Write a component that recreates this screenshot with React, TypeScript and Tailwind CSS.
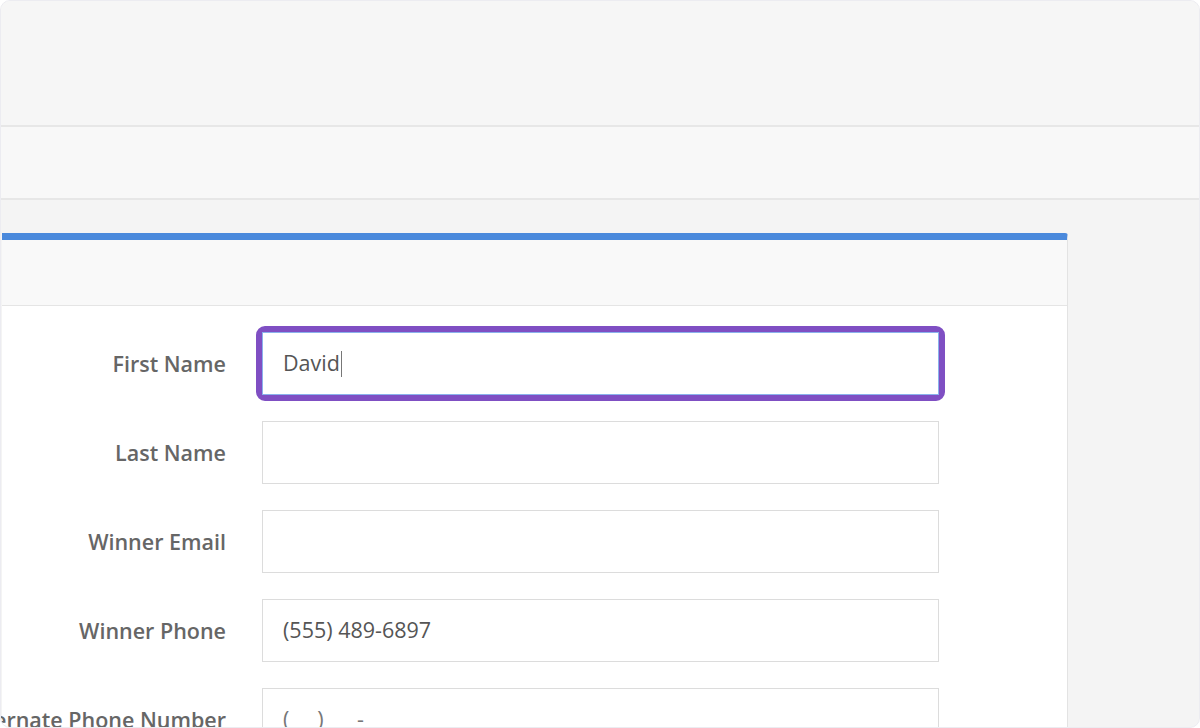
const rows = [
  { label: 'First Name', value: 'David', focused: true },
  { label: 'Last Name', value: '' },
  { label: 'Winner Email', value: '' },
  { label: 'Winner Phone', value: '(555) 489-6897' },
  { label: 'Alternate Phone Number', value: '', placeholder: '(     )      -' },
]

function Field({ value, placeholder, focused }: { value: string; placeholder?: string; focused?: boolean }) {
  const box = (
    <div
      className={
        'flex h-[63px] w-[677px] items-center border bg-white pl-[20px] text-[21.5px] text-[#555] ' +
        (focused ? 'border-[#8ab2ec]' : 'border-[#dcdcdc]')
      }
    >
      {value ? (
        <span>{value}</span>
      ) : (
        <span className="whitespace-pre text-[#777]">{placeholder}</span>
      )}
      {focused && <span className="ml-[1px] h-[26px] w-[1px] bg-[#777]" />}
    </div>
  )
  if (!focused) return box
  return <div className="-m-[6px] rounded-[9px] border-[6px] border-[#7f4fc3]">{box}</div>
}

export default function App() {
  return (
    <div
      className="h-[728px] w-[1200px] overflow-hidden rounded-[10px] border border-[#ececf1] bg-[#f4f4f4]"
      style={{ fontFamily: '"Open Sans", "Noto Sans", sans-serif' }}
    >
      <div className="h-[126px] border-b-[2px] border-[#e7e7e7] bg-[#f6f6f6]" />
      <div className="h-[73px] border-b-[2px] border-[#e7e7e7] bg-[#f8f8f8]" />
      <div className="mt-[33px] ml-[1px] w-[1066px] rounded-tr-[3px] border-t-[7px] border-r border-t-[#4a89dc] border-r-[#e3e3e3] bg-white">
        <div className="h-[66px] border-b border-[#e5e5e5] bg-[#f9f9f9]" />
        <div className="flex flex-col gap-[26px] pt-[26px]">
          {rows.map((r) => (
            <div key={r.label} className="flex items-center">
              <div className="flex w-[224px] shrink-0 justify-end pt-[1px]">
                <span className="shrink-0 whitespace-nowrap text-[21.5px] font-semibold text-[#666]">
                  {r.label}
                </span>
              </div>
              <div className="ml-[36px]">
                <Field value={r.value} placeholder={r.placeholder} focused={r.focused} />
              </div>
            </div>
          ))}
        </div>
      </div>
    </div>
  )
}
